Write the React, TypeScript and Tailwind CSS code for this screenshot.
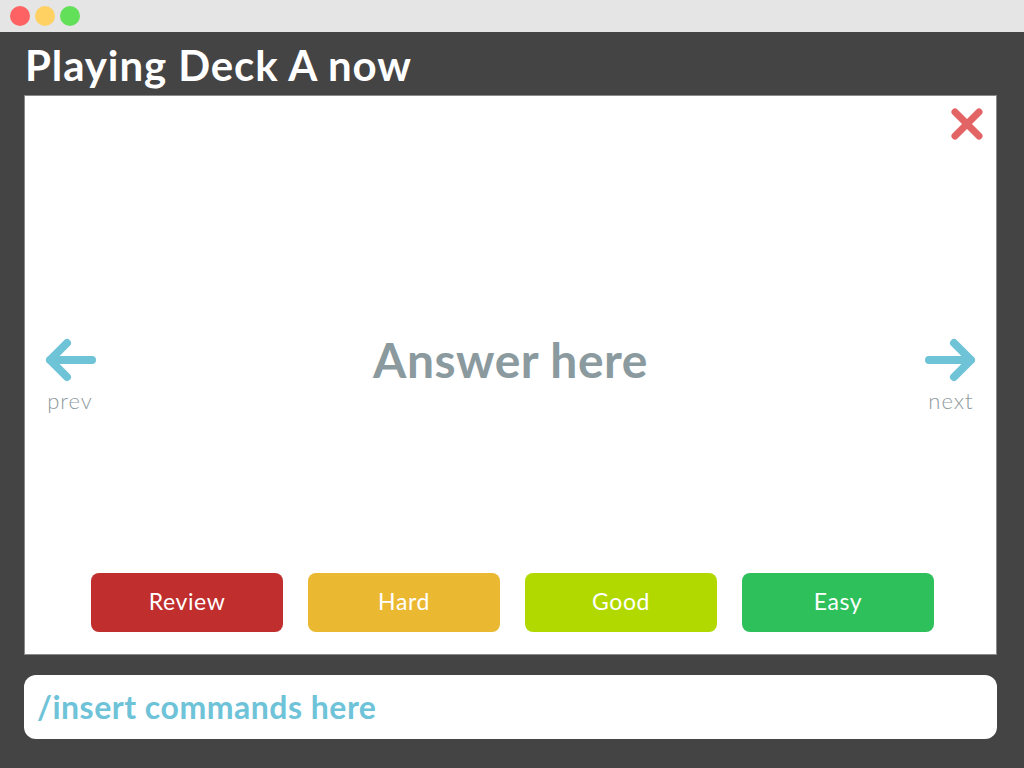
import type { FC } from "react";

const ArrowLeft: FC = () => (
  <svg width="52" height="50" viewBox="0 0 52 50" fill="none">
    <path d="M48 25H6M23 8L6 25l17 17" stroke="#6ec3d7" strokeWidth="8" strokeLinecap="round" strokeLinejoin="round" />
  </svg>
);

const ArrowRight: FC = () => (
  <svg width="52" height="50" viewBox="0 0 52 50" fill="none">
    <path d="M4 25h42M29 8l17 17-17 17" stroke="#6ec3d7" strokeWidth="8" strokeLinecap="round" strokeLinejoin="round" />
  </svg>
);

const CloseIcon: FC = () => (
  <svg width="34" height="34" viewBox="0 0 34 34" fill="none">
    <path d="M5 5l24 24M29 5L5 29" stroke="#e36464" strokeWidth="7" strokeLinecap="round" />
  </svg>
);

const buttons = [
  { label: "Review", color: "bg-[#c02e2e]" },
  { label: "Hard", color: "bg-[#ebb831]" },
  { label: "Good", color: "bg-[#b1d900]" },
  { label: "Easy", color: "bg-[#2ec05b]" },
];

const App: FC = () => (
  <div className="flex h-[768px] w-[1024px] flex-col bg-[#444444] font-['Lato',sans-serif]">
    {/* window chrome */}
    <div className="flex h-8 items-center gap-[5px] bg-[#e5e5e5] pl-[10px]">
      <span className="h-5 w-5 rounded-full bg-[#ff6262]" />
      <span className="h-5 w-5 rounded-full bg-[#ffd062]" />
      <span className="h-5 w-5 rounded-full bg-[#62e05a]" />
    </div>

    <div className="flex flex-1 flex-col pl-6 pr-[27px]">
      <div className="flex h-[63px] items-center pl-[1px] pt-[3px] text-[42px] font-bold leading-none tracking-[0.9px] text-white">
        Playing Deck A now
      </div>

      {/* card */}
      <div className="relative flex h-[560px] flex-col border border-[#8a8a8a] bg-white">
        <button className="absolute right-[12px] top-[11px]">
          <CloseIcon />
        </button>

        <div className="flex h-[477px] items-start pt-[239px]">
          <div className="ml-[19px] flex w-[52px] flex-col items-center">
            <ArrowLeft />
            <span className="mt-[4px] text-[22px] font-light leading-[24px] tracking-[1px] text-[#8e9a9d]">prev</span>
          </div>
          <div className="flex-1 text-center text-[48px] font-bold leading-[50px] tracking-[0.5px] text-[#8a9a9e]">
            Answer here
          </div>
          <div className="mr-[19px] flex w-[52px] flex-col items-center">
            <ArrowRight />
            <span className="mt-[4px] text-[22px] font-light leading-[24px] tracking-[1px] text-[#8e9a9d]">next</span>
          </div>
        </div>

        <div className="flex gap-[25px] pl-[66px]">
          {buttons.map((b) => (
            <button
              key={b.label}
              className={`${b.color} flex h-[59px] w-[192px] items-center justify-center rounded-lg pb-[3px] text-[23px] tracking-[0.6px] text-white`}
            >
              {b.label}
            </button>
          ))}
        </div>
      </div>

      {/* command bar */}
      <div className="mt-5 flex h-16 items-center rounded-xl bg-white pl-[13px]">
        <span className="text-[32px] font-bold tracking-[0.5px] text-[#6ec3d8]">/insert commands here</span>
      </div>
    </div>
  </div>
);

export default App;
